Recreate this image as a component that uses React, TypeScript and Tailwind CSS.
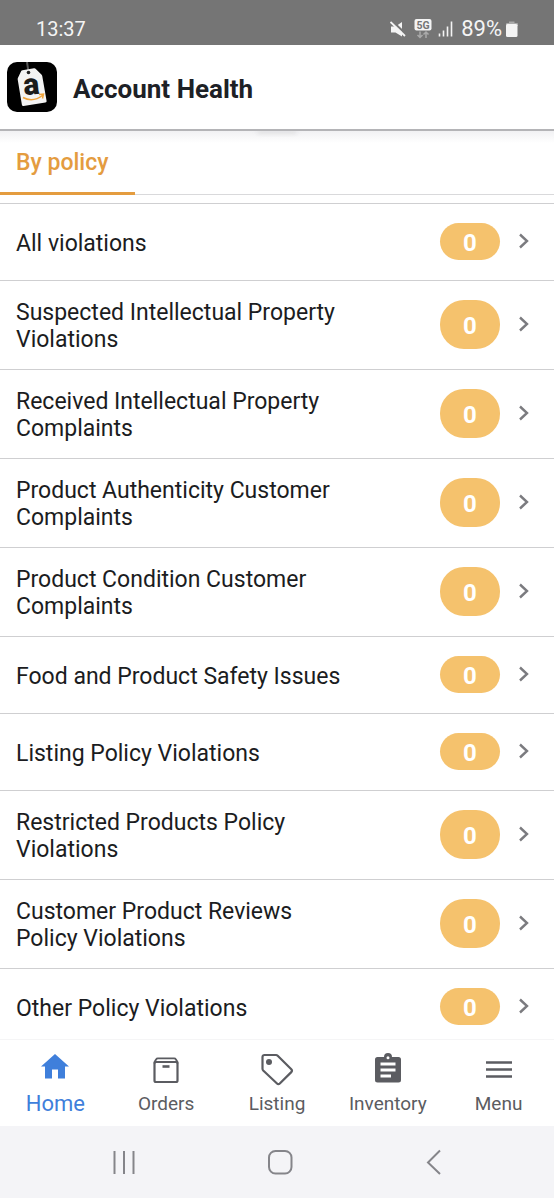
import type { ReactNode } from "react";

const violations = [
  { label: "All violations", count: 0 },
  { label: "Suspected Intellectual Property Violations", count: 0 },
  { label: "Received Intellectual Property Complaints", count: 0 },
  { label: "Product Authenticity Customer Complaints", count: 0 },
  { label: "Product Condition Customer Complaints", count: 0 },
  { label: "Food and Product Safety Issues", count: 0 },
  { label: "Listing Policy Violations", count: 0 },
  { label: "Restricted Products Policy Violations", count: 0 },
  { label: "Customer Product Reviews Policy Violations", count: 0 },
  { label: "Other Policy Violations", count: 0 },
];

function StatusBar() {
  return (
    <div className="flex h-[45px] shrink-0 items-end justify-between bg-[#757575] pr-9 pb-1 pl-9 text-xl leading-6 text-[#f4f4f4]">
      <span>13:37</span>
      <div className="flex items-center">
        <svg width="16" height="18" viewBox="0 0 16 18" className="mr-2">
          <path d="M1 6.500h4.500L12 2v14.500L5.500 12.500H1z" fill="#f4f4f4" />
          <path d="M1.500 0.500L16 14.500" stroke="#757575" strokeWidth="2.400" />
          <path d="M0.500 2L15 16" stroke="#f4f4f4" strokeWidth="1.800" />
        </svg>
        <svg width="18" height="20" viewBox="0 0 18 20" className="mr-1.5">
          <rect x="0.5" width="17" height="11.5" rx="2" fill="#f4f4f4" />
          <text
            x="9"
            y="9.5"
            textAnchor="middle"
            fontSize="10.5"
            fontWeight="700"
            fill="#757575"
          >
            5G
          </text>
          <path
            d="M6 12.5v6M3.5 16l2.5 2.5L8.500 16M12 19v-6M9.500 15.500L12 13l2.500 2.500"
            stroke="#a9a9a9"
            strokeWidth="1.500"
            fill="none"
          />
        </svg>
        <svg width="15" height="16" viewBox="0 0 15 16" className="mr-2">
          <path
            d="M1.500 15.500v-3M5.500 15.500v-6M9.500 15.500v-10M13.500 15.500v-15"
            stroke="#f4f4f4"
            strokeWidth="1.600"
          />
        </svg>
        <span className="text-[22px]">89%</span>
        <svg width="12" height="16" viewBox="0 0 12 16" className="ml-1">
          <path d="M3 0.500h5.500v1.500H11a1 1 0 0 1 1 1v2H0V3a1 1 0 0 1 1-1h2z" fill="#a9a9a9" />
          <rect y="3" width="11.500" height="13" rx="1.500" fill="#f4f4f4" />
        </svg>
      </div>
    </div>
  );
}

function Logo() {
  return (
    <svg width="50" height="50" viewBox="0 0 50 50" className="shrink-0">
      <rect width="50" height="50" rx="10" fill="#000" />
      <path d="M20 0l1.500 10" stroke="#555" strokeWidth="2" />
      <path
        d="M15.500 8.200L27 6.300q1-.2 1.800.6l5.600 5.600q.7.700.9 1.700L39.600 39q.2 1.400-1.200 1.600L16.500 44q-1.400.2-1.600-1.200L10.700 17.500q-.1-1 .3-1.800l3.200-6.600q.4-.8 1.300-.9z"
        fill="#f3f3f3"
      />
      <circle cx="21.500" cy="10.500" r="1.800" fill="#222" />
      <text
        x="24.500"
        y="32.500"
        textAnchor="middle"
        fontSize="30"
        fontWeight="900"
        fill="#1b1b1b"
        transform="rotate(-6 24.500 25)"
      >
        a
      </text>
      <path
        d="M16 35.500q10 5.500 20-2.500M32 32.500l4.500-.5-1 4.500"
        stroke="#f0a33a"
        strokeWidth="1.500"
        fill="none"
      />
    </svg>
  );
}

function NavItem({
  label,
  active = false,
  children,
}: {
  label: string;
  active?: boolean;
  children: ReactNode;
}) {
  return (
    <a
      href="#"
      aria-current={active ? "page" : undefined}
      className={`flex flex-1 flex-col items-center pt-3 ${
        active ? "text-[#3f7fdb]" : "text-[#5b5c61]"
      }`}
    >
      <svg width="36" height="36" viewBox="0 0 36 36" fill="none">
        {children}
      </svg>
      <span
        className={`mt-1 leading-6 ${active ? "text-[22px]" : "text-[19px]"}`}
      >
        {label}
      </span>
    </a>
  );
}

function BottomNav() {
  return (
    <nav className="flex h-[87px] shrink-0 border-t border-[#f5f5f6] bg-white">
      <NavItem label="Home" active>
        <path d="M18 2L32 14.500H28V26.500H21V17.500H15V26.500H8V14.500H4z" fill="currentColor" />
      </NavItem>
      <NavItem label="Orders">
        <rect
          x="6.500"
          y="10"
          width="23"
          height="20"
          rx="1.500"
          stroke="currentColor"
          strokeWidth="2.200"
        />
        <path
          d="M6.500 11.500V10L8.200 7.200Q8.700 6.300 9.800 6.300H26.200Q27.300 6.300 27.800 7.200L29.500 10V11.500"
          stroke="currentColor"
          strokeWidth="1.800"
          strokeLinejoin="round"
        />
        <path d="M14.500 14.500H21.500" stroke="currentColor" strokeWidth="2.600" />
      </NavItem>
      <NavItem label="Listing">
        <path
          d="M3.500 5a2 2 0 0 1 2-2H17q1 0 1.700.7L32.300 17.300q1.400 1.400 0 2.800L20.800 31.500q-1.400 1.400-2.800 0L4.200 18.500q-.7-.7-.7-1.700z"
          stroke="currentColor"
          strokeWidth="2.200"
          strokeLinejoin="round"
        />
        <circle cx="10" cy="10" r="3" fill="currentColor" />
      </NavItem>
      <NavItem label="Inventory">
        <path
          fillRule="evenodd"
          clipRule="evenodd"
          d="M7.500 5H14a4 4 0 0 1 8 0h6.500A2.500 2.500 0 0 1 31 7.500v20.500a2.500 2.500 0 0 1-2.500 2.500h-21A2.500 2.500 0 0 1 5 28V7.500A2.500 2.500 0 0 1 7.500 5zM18 4.200a1.500 1.500 0 1 0 0 3 1.500 1.500 0 0 0 0-3zM10.500 10.500v3h15v-3zM10.500 16.500v3h15v-3zM10.500 22.500v3h10.500v-3z"
          fill="currentColor"
        />
      </NavItem>
      <NavItem label="Menu">
        <path
          d="M5 10.500H31M5 17.500H31M5 24.500H31"
          stroke="currentColor"
          strokeWidth="2.600"
        />
      </NavItem>
    </nav>
  );
}

function SystemBar() {
  return (
    <div className="flex h-[74px] shrink-0 items-center justify-between border-b-2 border-white bg-[#f4f4f7] pr-[106px] pl-[111px] text-[#85858a]">
      <button type="button" aria-label="Recent apps">
        <svg width="26" height="26" viewBox="0 0 26 26" fill="none">
          <path d="M3.500 2v23M13 2v23M22.500 2v23" stroke="currentColor" strokeWidth="2" />
        </svg>
      </button>
      <button type="button" aria-label="Home screen">
        <svg width="26" height="26" viewBox="0 0 26 26" fill="none">
          <rect x="2" y="2" width="22.500" height="22.500" rx="6.500" stroke="currentColor" strokeWidth="2" />
        </svg>
      </button>
      <button type="button" aria-label="Back">
        <svg width="26" height="26" viewBox="0 0 26 26" fill="none">
          <path d="M18 1.500L6 13.500l12 11.500" stroke="currentColor" strokeWidth="2" />
        </svg>
      </button>
    </div>
  );
}

export default function App() {
  return (
    <div className="flex h-screen flex-col bg-white font-[Roboto,sans-serif] text-[#1b1c21]">
      <StatusBar />

      <header className="flex h-[86px] shrink-0 items-center gap-4 border-b-2 border-[#b4b4b7] pl-[7px]">
        <Logo />
        <h1 className="pt-1 text-[26px] leading-8 font-bold text-[#1d2126]">
          Account Health
        </h1>
      </header>

      <main className="relative min-h-0 flex-1 overflow-y-auto [scrollbar-width:none]">
        {/* Shadow under the header */}
        <div className="pointer-events-none absolute inset-x-0 top-0 h-3 bg-linear-to-b from-[#f1f1f3] to-transparent"></div>
        <div className="pointer-events-none absolute top-0 left-1/2 h-0.5 w-10 -translate-x-1/2 rounded-b-full bg-[#d0d0d2] blur-[2px]"></div>

        {/* Tabs */}
        <div role="tablist" className="flex h-16 border-b border-[#d9d9db]">
          <button
            type="button"
            role="tab"
            aria-selected="true"
            className="relative -mb-px w-[135px] border-b-3 border-[#e49c3f] pt-0.5 pl-4 text-left text-[23px] leading-7 font-medium text-[#e49c3f]"
          >
            By policy
          </button>
        </div>

        {/* Violations list */}
        <ul className="mt-2">
          {violations.map((v) => (
            <li key={v.label} className="border-t border-[#cfcfd1]">
              <a href="#" className="flex min-h-[76px] items-center pr-[22px] pl-4">
                <span className="flex-1 pt-[18px] pr-[87px] pb-4 text-[23px] leading-[27px]">
                  {v.label}
                </span>
                <span className="mt-[19px] mb-5 flex w-[60px] items-center justify-center self-stretch rounded-3xl bg-[#f5c26d] pt-0.5 text-2xl leading-7 font-bold text-white">
                  {v.count}
                </span>
                <svg width="16" height="20" viewBox="0 0 16 20" fill="none" className="mb-0.5 ml-4">
                  <path d="M4 3.500l7 6.500-7 6.500" stroke="#7b7b7f" strokeWidth="2.400" />
                </svg>
              </a>
            </li>
          ))}
        </ul>
      </main>

      <BottomNav />
      <SystemBar />
    </div>
  );
}
